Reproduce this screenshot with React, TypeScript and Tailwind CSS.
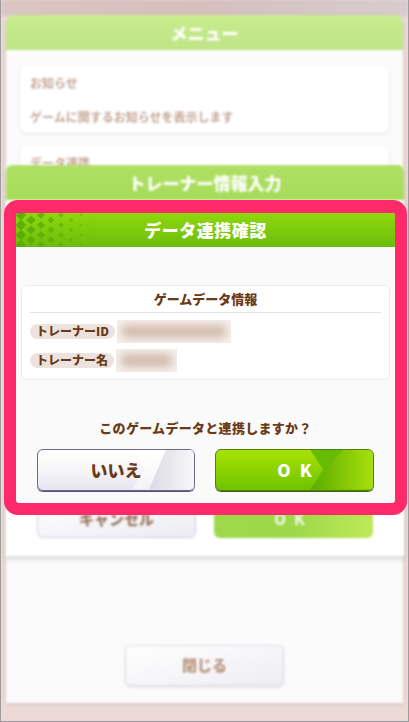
import React from "react";

const brown = "text-[#6b3a17]";

function Diamonds() {
  const items: React.ReactNode[] = [];
  for (let c = 0; c < 8; c++) {
    for (let r = 0; r < 4; r++) {
      const x = c * 10 + 5;
      const y = r * 10 + (c % 2 === 0 ? 2 : 7);
      const s = Math.max(0.8, 5.2 - c * 0.6);
      items.push(
        <polygon
          key={`${c}-${r}`}
          points={`${x},${y - s} ${x + s},${y} ${x},${y + s} ${x - s},${y}`}
          fill="#5aac08"
          opacity={Math.max(0.35, 0.95 - c * 0.08)}
        />
      );
    }
  }
  return (
    <svg width="84" height="34" viewBox="0 0 84 34" className="absolute left-0 top-0" aria-hidden="true">
      {items}
    </svg>
  );
}

function Blurred({ w }: { w: number }) {
  return (
    <div className="relative h-[23px] overflow-hidden bg-[#f6efeb]" style={{ width: w }}>
      <div className="absolute inset-x-[4px] inset-y-[5px] rounded-full bg-[#d2bbad] blur-[4px]" />
    </div>
  );
}

function Pill({ children }: { children: React.ReactNode }) {
  return (
    <span className={`inline-flex h-[15px] items-center rounded-full bg-[#ece3de] px-[6px] text-[12px] font-black leading-none ${brown}`}>
      {children}
    </span>
  );
}

function BackCard({ title, desc, h }: { title: string; desc?: string; h: number }) {
  return (
    <div className="rounded-[6px] bg-white px-[10px] pt-[8px] shadow-[0_1px_3px_rgba(0,0,0,0.12)]" style={{ height: h }}>
      <p className="text-[12px] font-bold text-[#c4a696]">{title}</p>
      {desc && <p className="mt-[16px] text-[12px] font-bold text-[#c4a696]">{desc}</p>}
    </div>
  );
}

export default function App() {
  return (
    <div
      className="relative h-[722px] w-[409px] overflow-hidden border-x border-b border-[#9c9c9c] bg-[#ead9d4]"
      style={{ fontFamily: '"Noto Sans CJK JP", "Noto Sans", sans-serif' }}
    >
      {/* blurred game screen behind */}
      <div className="absolute inset-x-0 top-0 h-[16px] bg-gradient-to-r from-[#dcc6c4] via-[#d6c0bf] to-[#d8cccf] blur-[1px]" />
      <div className="flex flex-col px-[5px] pt-[15px] blur-[1px]">
        <div className="flex h-[688px] flex-col overflow-hidden rounded-t-[8px] bg-[#fbfbfb] shadow-[0_1px_4px_rgba(0,0,0,0.1)]">
          <div className="flex h-[35px] items-center justify-center bg-gradient-to-b from-[#c8ec8e] to-[#bfe587] text-[17px] font-black text-white">
            メニュー
          </div>
          <div className="flex flex-col gap-[13px] px-[14px] pt-[16px]">
            <BackCard title="お知らせ" desc="ゲームに関するお知らせを表示します" h={67} />
            <BackCard title="データ連携" h={70} />
          </div>
          <div className="mt-auto mb-[17px] flex justify-center">
            <div className="flex h-[41px] w-[159px] items-center justify-center rounded-[6px] border border-[#dcdae6] bg-gradient-to-br from-white to-[#eeedf3] text-[15px] font-black text-[#b8977f] shadow-[0_2px_3px_rgba(0,0,0,0.08)]">
              閉じる
            </div>
          </div>
        </div>
      </div>

      {/* trainer info dialog (behind) */}
      <div className="absolute left-[5px] top-[165px] flex h-[391px] w-[398px] flex-col rounded-t-[6px] bg-white shadow-[0_4px_4px_rgba(0,0,0,0.12)] blur-[1px]">
        <div className="flex h-[35px] items-center justify-center rounded-t-[6px] bg-gradient-to-b from-[#b0e066] to-[#a6dc58] text-[17px] font-black text-white">
          トレーナー情報入力
        </div>
        <div className="mt-auto mb-[18px] flex justify-between px-[31px]">
          <div className="flex h-[38px] w-[159px] items-center justify-center rounded-[6px] border border-[#cfcde0] bg-gradient-to-br from-white to-[#ecebf2] text-[15px] font-black text-[#9c7a62]">
            キャンセル
          </div>
          <div className="flex h-[38px] w-[159px] items-center justify-center rounded-[6px] bg-gradient-to-r from-[#9fd84c] via-[#9cd84a] to-[#bfe956] text-[15px] font-black tracking-[8px] text-white/80">
            OK
          </div>
        </div>
      </div>

      {/* confirmation modal */}
      <div className="absolute left-[3px] top-[200px] h-[315px] w-[403px] rounded-[14px] bg-[#ff2a6a] px-[12px] pb-[12px] pt-[13px]">
        <div className="flex h-full flex-col overflow-hidden rounded-[3px] bg-[#fafafa]">
          <div className="relative flex h-[34px] shrink-0 items-center justify-center bg-gradient-to-b from-[#8fd80c] to-[#6cbc0c]">
            <Diamonds />
            <span className="relative text-[17px] font-black tracking-[0.5px] text-white">データ連携確認</span>
          </div>
          <div className="flex flex-1 flex-col px-[5px] pt-[38px]">
            <div className="h-[95px] rounded-[6px] border border-[#ececec] bg-white px-[8px] pt-[3px]">
              <p className={`text-center text-[13px] font-black ${brown}`}>ゲームデータ情報</p>
              <div className="mt-[3px] h-px bg-[#e3e3e3]" />
              <div className="mt-[7px] flex items-center gap-[2px]">
                <Pill>トレーナーID</Pill>
                <Blurred w={114} />
              </div>
              <div className="mt-[6px] flex items-center gap-[2px]">
                <Pill>トレーナー名</Pill>
                <Blurred w={61} />
              </div>
            </div>
            <p className={`mt-[38px] text-center text-[13px] font-black tracking-[0.3px] ${brown}`}>
              このゲームデータと連携しますか？
            </p>
            <div className="mt-[11px] flex justify-between px-[16px]">
              <button className="relative flex h-[42px] w-[158px] items-center justify-center overflow-hidden rounded-[6px] border border-[#6c688e] bg-gradient-to-b from-white via-[#f6f6f9] to-[#e6e4ee] shadow-[0_1px_0_#55507a]">
                <span className="absolute inset-y-0 right-0 w-[62px] bg-white/50 [clip-path:polygon(0_0,100%_0,100%_100%,0_100%,13px_50%)]" />
                <span className="absolute inset-y-0 right-0 w-[45px] bg-gradient-to-r from-[#dcdae4] to-[#f7f7fa] [clip-path:polygon(17px_0,100%_0,100%_100%,0_100%)]" />
                <span className={`relative text-[17px] font-black ${brown}`}>いいえ</span>
              </button>
              <button className="relative flex h-[42px] w-[159px] items-center justify-center overflow-hidden rounded-[6px] border border-[#4c7f14] bg-gradient-to-b from-[#a8e202] to-[#6ec300] shadow-[0_1px_0_#3c6410]">
                <span className="absolute inset-y-0 right-0 w-[63px] bg-[#67bb02] [clip-path:polygon(0_0,100%_0,100%_100%,0_100%,13px_50%)]" />
                <span className="absolute inset-y-0 right-0 w-[63px] bg-gradient-to-r from-[#58aa00] to-[#a8e00c] [clip-path:polygon(33px_0,100%_0,100%_100%,0_100%)]" />
                <span className="relative pl-[9px] text-[17px] font-black tracking-[9px] text-white">OK</span>
              </button>
            </div>
          </div>
        </div>
      </div>
    </div>
  );
}
